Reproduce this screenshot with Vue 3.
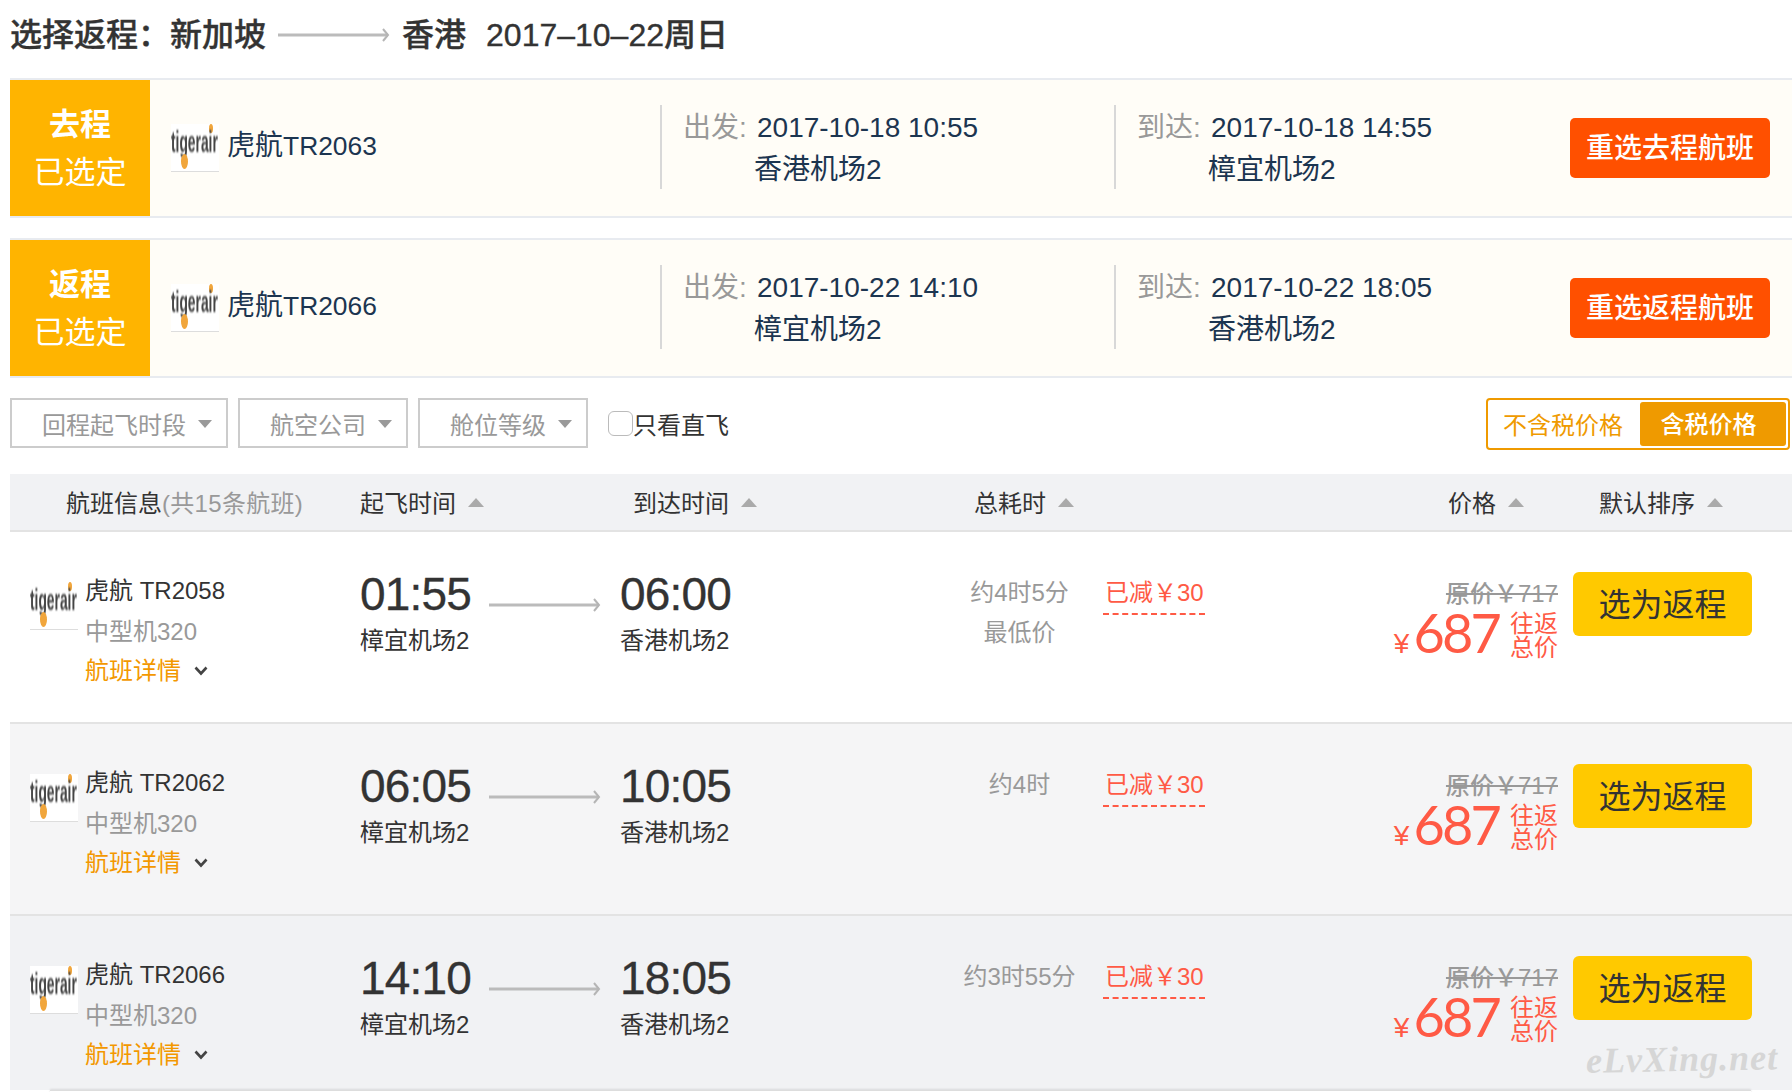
<script setup>
const selected = [
  { trip: '去程', flight: 'TR2063', depart: '2017-10-18 10:55', from: '香港机场2', arrive: '2017-10-18 14:55', to: '樟宜机场2' },
  { trip: '返程', flight: 'TR2066', depart: '2017-10-22 14:10', from: '樟宜机场2', arrive: '2017-10-22 18:05', to: '香港机场2' },
]
const filters = ['回程起飞时段', '航空公司', '舱位等级']
const flights = [
  { no: 'TR2058', dep: '01:55', arr: '06:00', from: '樟宜机场2', to: '香港机场2', dur: '约4时5分', low: true },
  { no: 'TR2062', dep: '06:05', arr: '10:05', from: '樟宜机场2', to: '香港机场2', dur: '约4时', low: false },
  { no: 'TR2066', dep: '14:10', arr: '18:05', from: '樟宜机场2', to: '香港机场2', dur: '约3时55分', low: false },
]
</script>

<template>
  <div class="page">
    <h1 class="title">
      <span class="t-lead">选择返程：</span>
      <span>新加坡</span>
      <svg class="t-arrow" width="112" height="16" viewBox="0 0 112 16"><path d="M0 8H110" stroke="#bbb" stroke-width="3"/><path d="M105 2l5 6-5 6" fill="none" stroke="#b5b5b5" stroke-width="2"/></svg>
      <span>香港</span>
      <span class="t-date">2017–10–22周日</span>
    </h1>

    <section v-for="s in selected" :key="s.flight" class="card">
      <div class="badge"><strong>{{ s.trip }}</strong><span>已选定</span></div>
      <div class="card-flight">
        <div class="logo"><span>tigerair</span></div>
        <span class="card-name">虎航<span class="latin">{{ s.flight }}</span></span>
      </div>
      <div class="seg">
        <span class="seg-label">出发:</span><span>{{ s.depart }}</span>
        <span></span><span class="seg-place">{{ s.from }}</span>
      </div>
      <div class="seg">
        <span class="seg-label">到达:</span><span>{{ s.arrive }}</span>
        <span></span><span class="seg-place">{{ s.to }}</span>
      </div>
      <button class="redo">重选{{ s.trip }}航班</button>
    </section>

    <div class="filters">
      <div v-for="(f, i) in filters" :key="f" class="select" :class="'select-' + i">{{ f }}<i class="caret"></i></div>
      <label class="direct"><input type="checkbox" />只看直飞</label>
      <div class="tax">
        <span class="tax-off">不含税价格</span>
        <span class="tax-on">含税价格</span>
      </div>
    </div>

    <div class="head">
      <div class="h-info">航班信息<span>(共15条航班)</span></div>
      <div>起飞时间<i class="sort"></i></div>
      <div>到达时间<i class="sort"></i></div>
      <div>总耗时<i class="sort"></i></div>
      <div>价格<i class="sort"></i></div>
      <div>默认排序<i class="sort"></i></div>
    </div>

    <article v-for="(f, i) in flights" :key="f.no" class="row" :class="{ shaded: i === 1, last: i === 2 }">
      <div class="info">
        <div class="logo logo-row"><span>tigerair</span></div>
        <div class="info-text">
          <div>虎航 {{ f.no }}</div>
          <div class="muted">中型机320</div>
          <div class="detail">航班详情
            <svg width="14" height="10" viewBox="0 0 14 10"><path d="M1.5 1.5l5.5 6 5.500-6" fill="none" stroke="#444" stroke-width="2.6"/></svg>
          </div>
        </div>
      </div>
      <div class="leg">
        <div class="time-line">
          <b class="time">{{ f.dep }}</b>
          <svg width="112" height="16" viewBox="0 0 112 16"><path d="M0 8H110" stroke="#bbb" stroke-width="3"/><path d="M105 2l5 6-5 6" fill="none" stroke="#b5b5b5" stroke-width="2"/></svg>
        </div>
        <div class="place">{{ f.from }}</div>
      </div>
      <div class="leg">
        <b class="time">{{ f.arr }}</b>
        <div class="place">{{ f.to }}</div>
      </div>
      <div class="dur">
        <div>{{ f.dur }}</div>
        <div v-if="f.low">最低价</div>
      </div>
      <div class="cut"><span>已减￥30</span></div>
      <div class="price">
        <s>原价￥717</s>
        <div class="total">
          <span class="yen">¥</span><span class="num">687</span>
          <span class="round">往返<br />总价</span>
        </div>
      </div>
      <button class="pick">选为返程</button>
    </article>

    <div class="panel"></div>
    <div class="mark">eLvXing.net</div>
  </div>
</template>

<style>
html, body { margin: 0; background: #fff; overflow: hidden; }
</style>

<style scoped>
.page {
  position: relative;
  width: 1792px;
  height: 1092px;
  overflow: hidden;
  padding-left: 10px;
  box-sizing: border-box;
  font-family: "Liberation Sans", "Noto Sans CJK SC", sans-serif;
  font-size: 24px;
  color: #333;
}
.title {
  display: flex;
  align-items: center;
  height: 68px;
  margin: 0 0 10px;
  padding-top: 2px;
  box-sizing: border-box;
  font-size: 32px;
  font-weight: 500;
  line-height: 66px;
  color: #333;
  -webkit-text-stroke: .35px #333;
  white-space: nowrap;
}
.t-lead { width: 160px; }
.t-arrow { margin: 0 12px 0 12px; -webkit-text-stroke: 0; }
.t-date { margin-left: 20px; }

.card {
  display: grid;
  grid-template-columns: 140px 510px 454px 456px 200px;
  align-items: center;
  height: 140px;
  box-sizing: border-box;
  margin-bottom: 20px;
  background: #fffdf7;
  border-top: 2px solid #e8ebf0;
  border-bottom: 2px solid #e8ebf0;
  color: #1c3550;
  font-size: 28px;
}
.badge {
  display: flex;
  flex-direction: column;
  align-items: center;
  justify-content: center;
  gap: 8px;
  height: 136px;
  padding-top: 1px;
  box-sizing: border-box;
  background: #ffb400;
  color: #fff;
  font-size: 31px;
  line-height: 40px;
}
.badge strong { font-weight: 700; }
.card-flight { display: flex; align-items: center; padding-left: 21px; gap: 8px; }
.card-name { line-height: 40px; margin-top: -4px; }
.latin { font-size: 26.4px; }
.logo {
  position: relative;
  flex: none;
  width: 48px;
  height: 48px;
  overflow: hidden;
  background: #fff;
  border-bottom: 1px solid #ddd;
  box-sizing: border-box;
}
.logo span {
  position: absolute;
  left: 0;
  top: 3px;
  width: 100px;
  font-size: 30px;
  font-weight: 700;
  line-height: 30px;
  text-align: left;
  color: #444;
  transform: scaleX(.46);
  transform-origin: 0 50%;
  filter: blur(1px);
}
.logo::before, .logo::after {
  content: "";
  position: absolute;
  background: #f1a63c;
  border-radius: 50%;
  filter: blur(.7px);
}
.logo::before { left: 38px; top: 0; width: 4px; height: 9px; }
.logo::after { left: 10px; top: 30px; width: 7px; height: 15px; }
.logo-row { margin-top: 11px; }

.seg {
  display: grid;
  grid-template-columns: 74px 1fr;
  grid-template-rows: 45px 39px;
  align-items: center;
  height: 84px;
  padding-left: 21px;
  border-left: 2px solid #d8d8d8;
  box-sizing: border-box;
  margin-top: -2px;
  white-space: nowrap;
  line-height: 37px;
}
.seg-label { color: #999; }
.seg-place { margin-left: -3px; }
.redo {
  width: 200px;
  height: 60px;
  border: 0;
  border-radius: 5px;
  background: #ff5000;
  color: #fff;
  font: 500 28px "Liberation Sans", "Noto Sans CJK SC", sans-serif;
  padding: 0 0 4px;
}

.filters {
  display: flex;
  align-items: flex-start;
  height: 52px;
  margin-bottom: 24px;
}
.select {
  display: flex;
  align-items: center;
  height: 50px;
  margin-right: 10px;
  border: 2px solid #ccc;
  box-sizing: border-box;
  padding-left: 30px;
  color: #999;
  white-space: nowrap;
}
.select-0 { width: 218px; }
.select-1 { width: 170px; }
.select-2 { width: 170px; }
.caret {
  width: 0;
  height: 0;
  margin-left: 12px;
  margin-top: 2px;
  border-left: 7.5px solid transparent;
  border-right: 7.5px solid transparent;
  border-top: 8px solid #999;
}
.direct {
  display: flex;
  align-items: center;
  height: 50px;
  margin-left: 10px;
  color: #333;
}
.direct input {
  appearance: none;
  width: 25px;
  height: 25px;
  margin: 0;
  background: #fff;
  border: 1px solid #bbb;
  border-radius: 6px;
}
.tax {
  display: flex;
  align-items: center;
  width: 304px;
  height: 52px;
  margin-left: auto;
  margin-right: 2px;
  border: 2px solid #ef9a00;
  border-radius: 4px;
  box-sizing: border-box;
  background: #fff;
  color: #ef9a00;
}
.tax-off { margin-left: 15px; margin-top: -2px; width: 137px; }
.tax-on {
  width: 146px;
  height: 44px;
  padding-right: 9px;
  box-sizing: border-box;
  line-height: 46px;
  text-align: center;
  background: #ef9a00;
  border-radius: 3px;
  color: #fff;
  font-weight: 500;
}

.head {
  display: grid;
  grid-template-columns: 350px 273px 341px 474px 151px 1fr;
  align-items: center;
  height: 58px;
  box-sizing: border-box;
  padding-bottom: 2px;
  background: #f1f2f4;
  border-bottom: 2px solid #e3e3e3;
  white-space: nowrap;
}
.h-info { padding-left: 56px; }
.h-info span { color: #999; letter-spacing: .3px; }
.sort {
  display: inline-block;
  width: 0;
  height: 0;
  margin-left: 12px;
  vertical-align: 5px;
  border-left: 8.5px solid transparent;
  border-right: 8.5px solid transparent;
  border-bottom: 9px solid #aaa;
}

.row {
  display: grid;
  grid-template-columns: 350px 260px 316px 164px 140px 318px 194px;
  align-items: start;
  height: 192px;
  padding-top: 36px;
  box-sizing: border-box;
  border-bottom: 2px solid #e3e3e3;
}
.row > * { min-width: 0; }
.shaded { background: #f5f5f6; }
.last { background: #f1f2f4; height: 174px; border-bottom: 0; }
.info { display: flex; gap: 7px; padding-left: 20px; margin-top: 3px; white-space: nowrap; }
.info-text { line-height: 40px; }
.muted { color: #999; position: relative; top: 1px; }
.detail { color: #f39800; display: flex; align-items: center; gap: 13px; }
.time-line { display: flex; align-items: center; gap: 19px; }
.time-line svg { margin-top: 22px; }
.time {
  display: block;
  width: 110px;
  height: 50px;
  margin-top: 1px;
  font-size: 46px;
  font-weight: 400;
  letter-spacing: -.8px;
  line-height: 50px;
  color: #333;
  -webkit-text-stroke: .3px #333;
  white-space: nowrap;
}
.place { line-height: 46px; color: #333; margin-top: -1px; }
.dur { color: #999; text-align: center; line-height: 40px; margin-top: 5px; padding-left: 3px; }
.cut { margin-top: 5px; line-height: 40px; color: #ff5a45; padding-left: 3px; }
.cut span { display: inline-block; padding: 0 1px 0 2px; border-bottom: 2px dashed #ff5a45; height: 40px; line-height: 40px; white-space: nowrap; }
.price { text-align: right; margin-top: 6px; white-space: nowrap; color: #ff5a45; }
.price s { display: block; margin-top: 5px; line-height: 30px; color: #999; font-weight: 500; }
.total { display: flex; justify-content: flex-end; align-items: center; height: 46px; margin-top: 4px; }
.yen { align-self: flex-end; margin-right: 4px; font-size: 28px; line-height: 30px; }
.num {
  font-family: Lato, "Liberation Sans", sans-serif;
  font-size: 54px;
  letter-spacing: -2.800px;
  line-height: 46px;
  margin-right: 11px;
  margin-bottom: 7px;
}
.round { display: block; width: 48px; line-height: 24px; text-align: right; }
.pick {
  width: 179px;
  height: 64px;
  margin-top: 4px;
  margin-left: 15px;
  border: 0;
  border-radius: 6px;
  background: #ffc900;
  color: #333;
  font: 32px "Liberation Sans", "Noto Sans CJK SC", sans-serif;
  padding: 0 0 4px;
}
.panel {
  width: 1701px;
  height: 10px;
  margin-left: 40px;
  background: #fff;
  border-top: 1px solid #ddd;
  box-shadow: 0 -1px 2px rgba(0, 0, 0, .1);
}
.mark {
  position: absolute;
  left: 1586px;
  top: 1038px;
  font: italic 700 36px "Liberation Serif", serif;
  letter-spacing: 1px;
  color: #d6d6d6;
  transform: rotate(-1deg);
  white-space: nowrap;
}
</style>
